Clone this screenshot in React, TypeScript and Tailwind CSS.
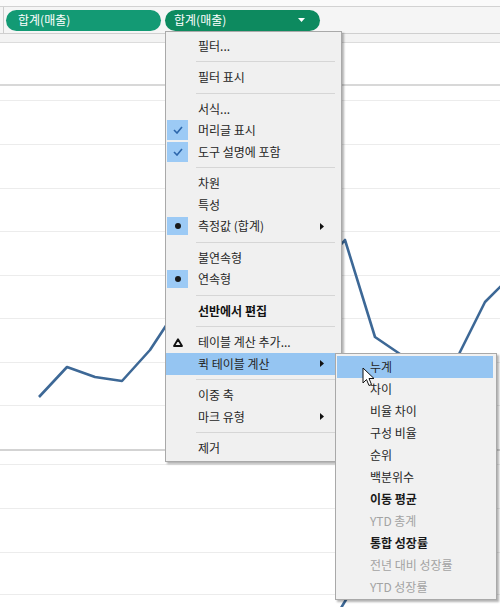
import React from "react";

type Icon = "check" | "dot" | "delta";
type Entry = { label: string; icon?: Icon; arrow?: boolean; bold?: boolean; hl?: boolean } | "sep";

const mainMenu: Entry[] = [
  { label: "필터..." },
  "sep",
  { label: "필터 표시" },
  "sep",
  { label: "서식..." },
  { label: "머리글 표시", icon: "check" },
  { label: "도구 설명에 포함", icon: "check" },
  "sep",
  { label: "차원" },
  { label: "특성" },
  { label: "측정값 (합계)", icon: "dot", arrow: true },
  "sep",
  { label: "불연속형" },
  { label: "연속형", icon: "dot" },
  "sep",
  { label: "선반에서 편집", bold: true },
  "sep",
  { label: "테이블 계산 추가...", icon: "delta" },
  { label: "퀵 테이블 계산", arrow: true, hl: true },
  "sep",
  { label: "이중 축" },
  { label: "마크 유형", arrow: true },
  "sep",
  { label: "제거" },
];

const subMenu = [
  { label: "누계", hl: true },
  { label: "차이" },
  { label: "비율 차이" },
  { label: "구성 비율" },
  { label: "순위" },
  { label: "백분위수" },
  { label: "이동 평균", bold: true },
  { label: "YTD 총계", off: true },
  { label: "통합 성장률", bold: true },
  { label: "전년 대비 성장률", off: true },
  { label: "YTD 성장률", off: true },
];

// gridline rows of the two panes (height incl. bottom border)
const topRows = [15, 44, 44, 43, 44, 43, 44, 43];
const lowRows = [14, 44, 44, 42];

function MenuIcon({ icon }: { icon?: Icon }) {
  if (icon === "check")
    return (
      <div className="flex h-[20px] w-[21px] items-center justify-center bg-[#9ccaf5]">
        <svg width="10" height="8" viewBox="0 0 10 8">
          <polyline points="1,4 4,7 9,1" fill="none" stroke="#2c66ab" strokeWidth="1.6" />
        </svg>
      </div>
    );
  if (icon === "dot")
    return (
      <div className="flex h-[18px] w-[21px] items-center justify-center bg-[#9ccaf5]">
        <div className="h-[6px] w-[6px] rounded-full bg-[#1a1a1a]" />
      </div>
    );
  if (icon === "delta")
    return (
      <div className="flex w-[21px] justify-center">
        <svg width="10" height="9" viewBox="0 0 10 9">
          <polygon points="5,1.2 9,8 1,8" fill="none" stroke="#111" strokeWidth="1.8" strokeLinejoin="round" />
        </svg>
      </div>
    );
  return <div className="w-[21px]" />;
}

function Arrow() {
  return (
    <svg width="4" height="7" viewBox="0 0 4 7" className="mr-[17px]">
      <polygon points="0,0 4,3.5 0,7" fill="#111" />
    </svg>
  );
}

export default function App() {
  return (
    <div className="relative h-[607px] w-[500px] overflow-hidden bg-white font-['Noto_Sans_CJK_KR',sans-serif] text-[12px] text-[#262626]">
      {/* top strip and shelf */}
      <div className="h-[6px] bg-[#fafafa]" />
      <div className="h-px bg-[#d2d2d2]" />
      <div className="flex h-[26px] items-center bg-[#f5f5f5]">
        <div className="ml-[3px] h-full w-px bg-[#cdcdcd]" />
        <div className="ml-[2px] flex h-[21px] w-[155px] items-center rounded-full bg-[#139a74] pl-[12px] text-white">
          합계(매출)
        </div>
        <div className="ml-[4px] flex h-[21px] w-[155px] items-center justify-between rounded-full bg-[#0d8a5f] pl-[9px] pr-[15px] text-white">
          <span>합계(매출)</span>
          <svg width="7" height="4" viewBox="0 0 7 4">
            <polygon points="0,0 7,0 3.5,4" fill="#fff" />
          </svg>
        </div>
      </div>
      <div className="h-px bg-[#cfcfcf]" />
      <div className="h-[8px] bg-[#f3f3f3]" />
      <div className="h-px bg-[#dcdcdc]" />
      <div className="h-[41px]" />
      <div className="h-[2px] bg-[#d8d8d8]" />

      {/* upper pane */}
      <div className="flex flex-col">
        {topRows.map((h, i) => (
          <div key={i} className="border-b border-[#ececec]" style={{ height: h }} />
        ))}
        <div className="h-[43px]" />
      </div>
      <div className="h-[2px] bg-[#d3d3d3]" />

      {/* lower pane */}
      <div className="flex flex-col">
        {lowRows.map((h, i) => (
          <div key={i} className="border-b border-[#ececec]" style={{ height: h }} />
        ))}
      </div>

      {/* line chart */}
      <svg className="pointer-events-none absolute left-0 top-0" width="500" height="607" viewBox="0 0 500 607">
        <polyline
          points="39,397 67,367 95,377 122,381 150,350 175,312 300,290 345,240 375,337 400,354 430,430 460,352 485,302 505,282"
          fill="none"
          stroke="#3d6896"
          strokeWidth="2.6"
          strokeLinejoin="round"
        />
        <polyline points="338,613 353,588" fill="none" stroke="#3d6896" strokeWidth="2.6" />
      </svg>

      {/* context menu */}
      <div className="absolute left-[165px] top-[31px] w-[177px] border border-[#a9a9a9] bg-[#f0f0f0] pb-[2px] pt-[3px] shadow-[2px_2px_2px_rgba(0,0,0,0.3)]">
        {mainMenu.map((m, i) =>
          m === "sep" ? (
            <div key={i} className="flex h-[10px] items-center">
              <div className="ml-[30px] mr-[6px] h-px flex-1 bg-[#d6d6d6]" />
            </div>
          ) : (
            <div key={i} className={`flex h-[21.5px] items-center pl-px ${m.hl ? "bg-[#95c5f2]" : ""}`}>
              <MenuIcon icon={m.icon} />
              <span className={`ml-[10px] flex-1 ${m.bold ? "font-bold text-[#111]" : ""}`}>{m.label}</span>
              {m.arrow && <Arrow />}
            </div>
          )
        )}
      </div>

      {/* quick table calculation submenu */}
      <div className="absolute left-[335px] top-[353px] w-[162px] border border-[#a9a9a9] bg-[#f1f1f1] pb-px pt-[2px] shadow-[2px_2px_2px_rgba(0,0,0,0.3)]">
        {subMenu.map((s, i) => (
          <div
            key={i}
            className={`ml-px mr-[3px] flex h-[22px] items-center pl-[33px] ${s.hl ? "bg-[#95c5f2]" : ""} ${
              s.off ? "text-[#a3a3a3]" : s.bold ? "font-bold text-[#1a1a1a]" : ""
            }`}
          >
            {s.label}
          </div>
        ))}
      </div>

      {/* mouse pointer */}
      <svg className="pointer-events-none absolute left-[362px] top-[367px]" width="13" height="20" viewBox="0 0 13 20">
        <polygon points="1,1 1,16 4.5,12.5 7,18.5 9.5,17.5 7,11.5 12,11.5" fill="#fff" stroke="#111" strokeWidth="1" strokeLinejoin="round" />
      </svg>
    </div>
  );
}
